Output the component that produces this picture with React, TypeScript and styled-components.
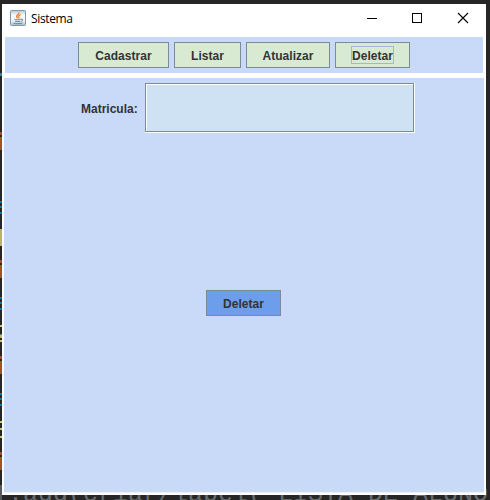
import React from "react";
import styled, { createGlobalStyle } from "styled-components";

const GlobalStyle = createGlobalStyle`
  * { box-sizing: border-box; }
  body { margin: 0; background: #262626; }
`;

const Desktop = styled.div`
  position: relative;
  width: 490px;
  height: 500px;
  overflow: hidden;
  background: #262626;
  padding: 4px 0 0 2px;
`;

const CodeLine = styled.div`
  position: absolute;
  left: 8px;
  top: 481px;
  white-space: pre;
  font: 25px/28px "Liberation Mono", monospace;
  color: #686c6d;
`;

const CodeMark = styled.i<{ $y: number; $h: number; $color: string }>`
  position: absolute;
  left: 0;
  top: ${(p) => p.$y}px;
  width: 2px;
  height: ${(p) => p.$h}px;
  background: ${(p) => p.$color};
`;

const Window = styled.section`
  position: relative;
  width: 484px;
  height: 491px;
  background: #fff;
  display: flex;
  flex-direction: column;
`;

const TitleBar = styled.header`
  height: 33px;
  display: flex;
  align-items: flex-start;
  padding: 6px 0 0 8px;
`;

const Title = styled.span`
  flex: 1;
  margin: 1px 0 0 5px;
  font: 12px/16px "Open Sans", "Noto Sans", sans-serif;
  letter-spacing: -0.35px;
  color: #000;
`;

const Controls = styled.svg`
  width: 138px;
  height: 20px;
`;

const Toolbar = styled.nav`
  height: 36px;
  margin: 0 3px;
  padding: 5px 0 0 73px;
  background: #c9daf8;
  display: flex;
  gap: 5px;
`;

const Button = styled.button<{ $width: number; $primary?: boolean }>`
  width: ${(p) => p.$width}px;
  height: 26px;
  padding: 1px 0 0;
  border: 1px solid #7a8a99;
  border-radius: 0;
  background: ${(p) => (p.$primary ? "#6d9eeb" : "#d9ead3")};
  color: #333;
  font: bold 12px/14px "Liberation Sans", Arial, sans-serif;
  letter-spacing: 0.05px;
  display: flex;
  align-items: center;
  justify-content: center;
`;

const Focus = styled.span`
  outline: 1px solid #a3b8cc;
  height: 16px;
  line-height: 18px;
  margin-top: -1px;
`;

const Panel = styled.main`
  height: 414px;
  margin: 5px 2px 0;
  background: #c9daf8;
  box-shadow: 0 1px 0 #f0f0f0;
  display: flex;
  flex-direction: column;
  align-items: flex-start;
`;

const FieldRow = styled.div`
  display: flex;
  align-items: center;
  padding: 5px 0 0 77px;
`;

const Label = styled.label`
  width: 64px;
  padding-top: 2px;
  color: #333;
  font: bold 12px/14px "Liberation Sans", Arial, sans-serif;
`;

const EtchedFrame = styled.div`
  width: 270px;
  height: 50px;
  border: 1px solid #fff;
  border-width: 0 1px 1px 0;
`;

const Field = styled.input`
  display: block;
  width: 269px;
  height: 49px;
  padding: 2px;
  border: 1px solid #7a8a99;
  border-radius: 0;
  outline: none;
  background: #cfe2f3;
  box-shadow: inset 1px 1px 0 #fff;
`;

const Action = styled.div`
  padding: 157px 0 0 202px;
`;

const marks: [number, number, string][] = [
  [73, 3, "#35829a"],
  [132, 3, "#a65319"], [137, 13, "#a65319"],
  [201, 2, "#0878ad"], [206, 2, "#0878ad"], [212, 2, "#0878ad"],
  [229, 17, "#b8b560"],
  [260, 3, "#a65319"], [265, 13, "#a65319"],
  [297, 2, "#0878ad"], [302, 2, "#0878ad"], [308, 2, "#0878ad"],
  [325, 2, "#c8c579"], [334, 1, "#4d8189"], [335, 3, "#b8b560"], [340, 2, "#c8c579"],
  [356, 3, "#a65319"], [361, 13, "#a65319"],
  [393, 2, "#0878ad"], [398, 2, "#0878ad"], [404, 2, "#0878ad"],
  [421, 2, "#c8c579"], [428, 2, "#c8c579"], [436, 2, "#c8c579"],
  [452, 3, "#a65319"], [457, 13, "#a65319"],
  [485, 15, "#555b5c"],
];

function JavaIcon() {
  return (
    <svg width="16" height="16" viewBox="0 0 16 16">
      <defs>
        <linearGradient id="face" x2="0" y2="1">
          <stop stopColor="#b5c6d3" />
          <stop offset=".3" stopColor="#f6f9fb" />
          <stop offset=".7" stopColor="#eef3f6" />
          <stop offset="1" stopColor="#a3b8c8" />
        </linearGradient>
      </defs>
      <rect x=".5" y=".5" width="15" height="15" rx="1" fill="url(#face)" stroke="#7d98ad" />
      <path d="M8.8 2.4C9.6 4.3 6 4.9 6.6 6.6c.2.8 1 1.1 1.2 1.7M10.8 4.5C8.9 5.2 8.4 6 8.9 6.9c.4.6.1 1-.4 1.4" fill="none" stroke="#f07c16" strokeWidth="1.3" />
      <path d="M4.4 9.4c1.6.5 4.6.4 6.3 0M5.1 11.3c1.5.4 3.7.4 5.2 0M10.9 9.2c2.4-.5 2.3 1.6.2 2.3M3.6 13.2c1.6.7 6.4.7 8.8-.3" fill="none" stroke="#5f7f99" strokeWidth="1" />
    </svg>
  );
}

export default function App() {
  return (
    <>
      <GlobalStyle />
      <Desktop>
        {marks.map(([y, h, color]) => (
          <CodeMark key={y} $y={y} $h={h} $color={color} />
        ))}
        <CodeLine>.add(criar/label( LISTA DE ALUNO</CodeLine>
        <Window>
          <TitleBar>
            <JavaIcon />
            <Title>Sistema</Title>
            <Controls viewBox="0 0 138 20">
              <path d="M19 8.5h10M64.5 3.5h9v9h-9z" fill="none" stroke="#000" shapeRendering="crispEdges" />
              <path d="M110 3l10 10M120 3l-10 10" stroke="#000" strokeWidth="1.1" />
            </Controls>
          </TitleBar>
          <Toolbar>
            <Button $width={91}>Cadastrar</Button>
            <Button $width={67}>Listar</Button>
            <Button $width={84}>Atualizar</Button>
            <Button $width={75}><Focus>Deletar</Focus></Button>
          </Toolbar>
          <Panel>
            <FieldRow>
              <Label htmlFor="matricula">Matricula:</Label>
              <EtchedFrame><Field id="matricula" /></EtchedFrame>
            </FieldRow>
            <Action><Button $width={75} $primary>Deletar</Button></Action>
          </Panel>
        </Window>
      </Desktop>
    </>
  );
}
